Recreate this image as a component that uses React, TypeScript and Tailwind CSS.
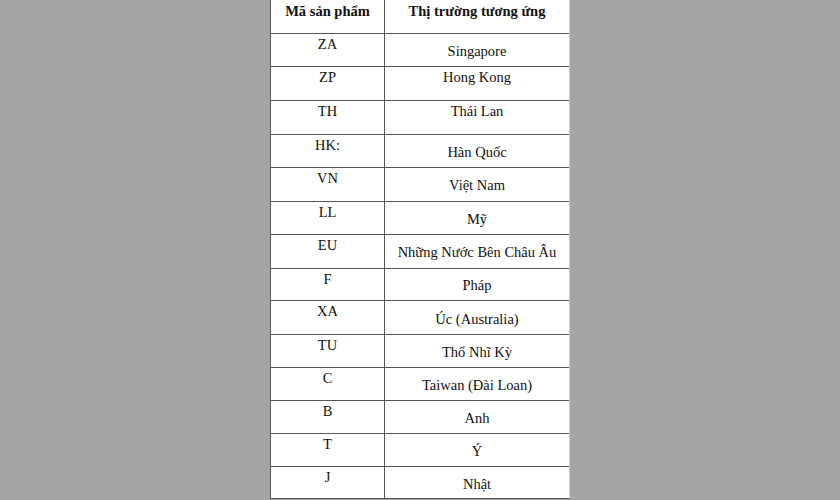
const rows: { code: string; market: string; mid?: boolean; h: number }[] = [
  { code: 'ZA', market: 'Singapore', mid: true, h: 33 },
  { code: 'ZP', market: 'Hong Kong', h: 34 },
  { code: 'TH', market: 'Thái Lan', h: 34 },
  { code: 'HK:', market: 'Hàn Quốc', mid: true, h: 33 },
  { code: 'VN', market: 'Việt Nam', mid: true, h: 34 },
  { code: 'LL', market: 'Mỹ', mid: true, h: 33 },
  { code: 'EU', market: 'Những Nước Bên Châu Âu', mid: true, h: 34 },
  { code: 'F', market: 'Pháp', mid: true, h: 33 },
  { code: 'XA', market: 'Úc (Australia)', mid: true, h: 34 },
  { code: 'TU', market: 'Thổ Nhĩ Kỳ', mid: true, h: 33 },
  { code: 'C', market: 'Taiwan (Đài Loan)', mid: true, h: 33 },
  { code: 'B', market: 'Anh', mid: true, h: 33 },
  { code: 'T', market: 'Ý', mid: true, h: 33 },
  { code: 'J', market: 'Nhật', mid: true, h: 32 },
]

export default function App() {
  return (
    <div
      className="w-[840px] h-[500px] bg-[#a5a5a5] flex justify-center overflow-hidden text-[14.5px] leading-[18px] text-[#111]"
      style={{ fontFamily: '"Liberation Serif", "Times New Roman", serif' }}
    >
      <div className="w-[300px] h-[499px] bg-white border-l border-l-[#5c5c5c] border-r border-r-[#d2d2d2] border-b border-b-[#555] flex flex-col">
        {/* header */}
        <div className="flex h-[33px] font-bold">
          <div className="w-[114px] border-r border-[#555] text-center pt-[2px]">Mã sản phẩm</div>
          <div className="flex-1 text-center pt-[2px]">Thị trường tương ứng</div>
        </div>

        {rows.map((r) => (
          <div key={r.code} className="flex border-t border-[#555]" style={{ height: r.h }}>
            <div className="w-[114px] border-r border-[#555] text-center pt-[1px]">{r.code}</div>
            <div
              className={
                r.mid
                  ? 'flex-1 flex items-center justify-center pt-[2px]'
                  : 'flex-1 text-center pt-[1px]'
              }
            >
              {r.market}
            </div>
          </div>
        ))}
      </div>
    </div>
  )
}
